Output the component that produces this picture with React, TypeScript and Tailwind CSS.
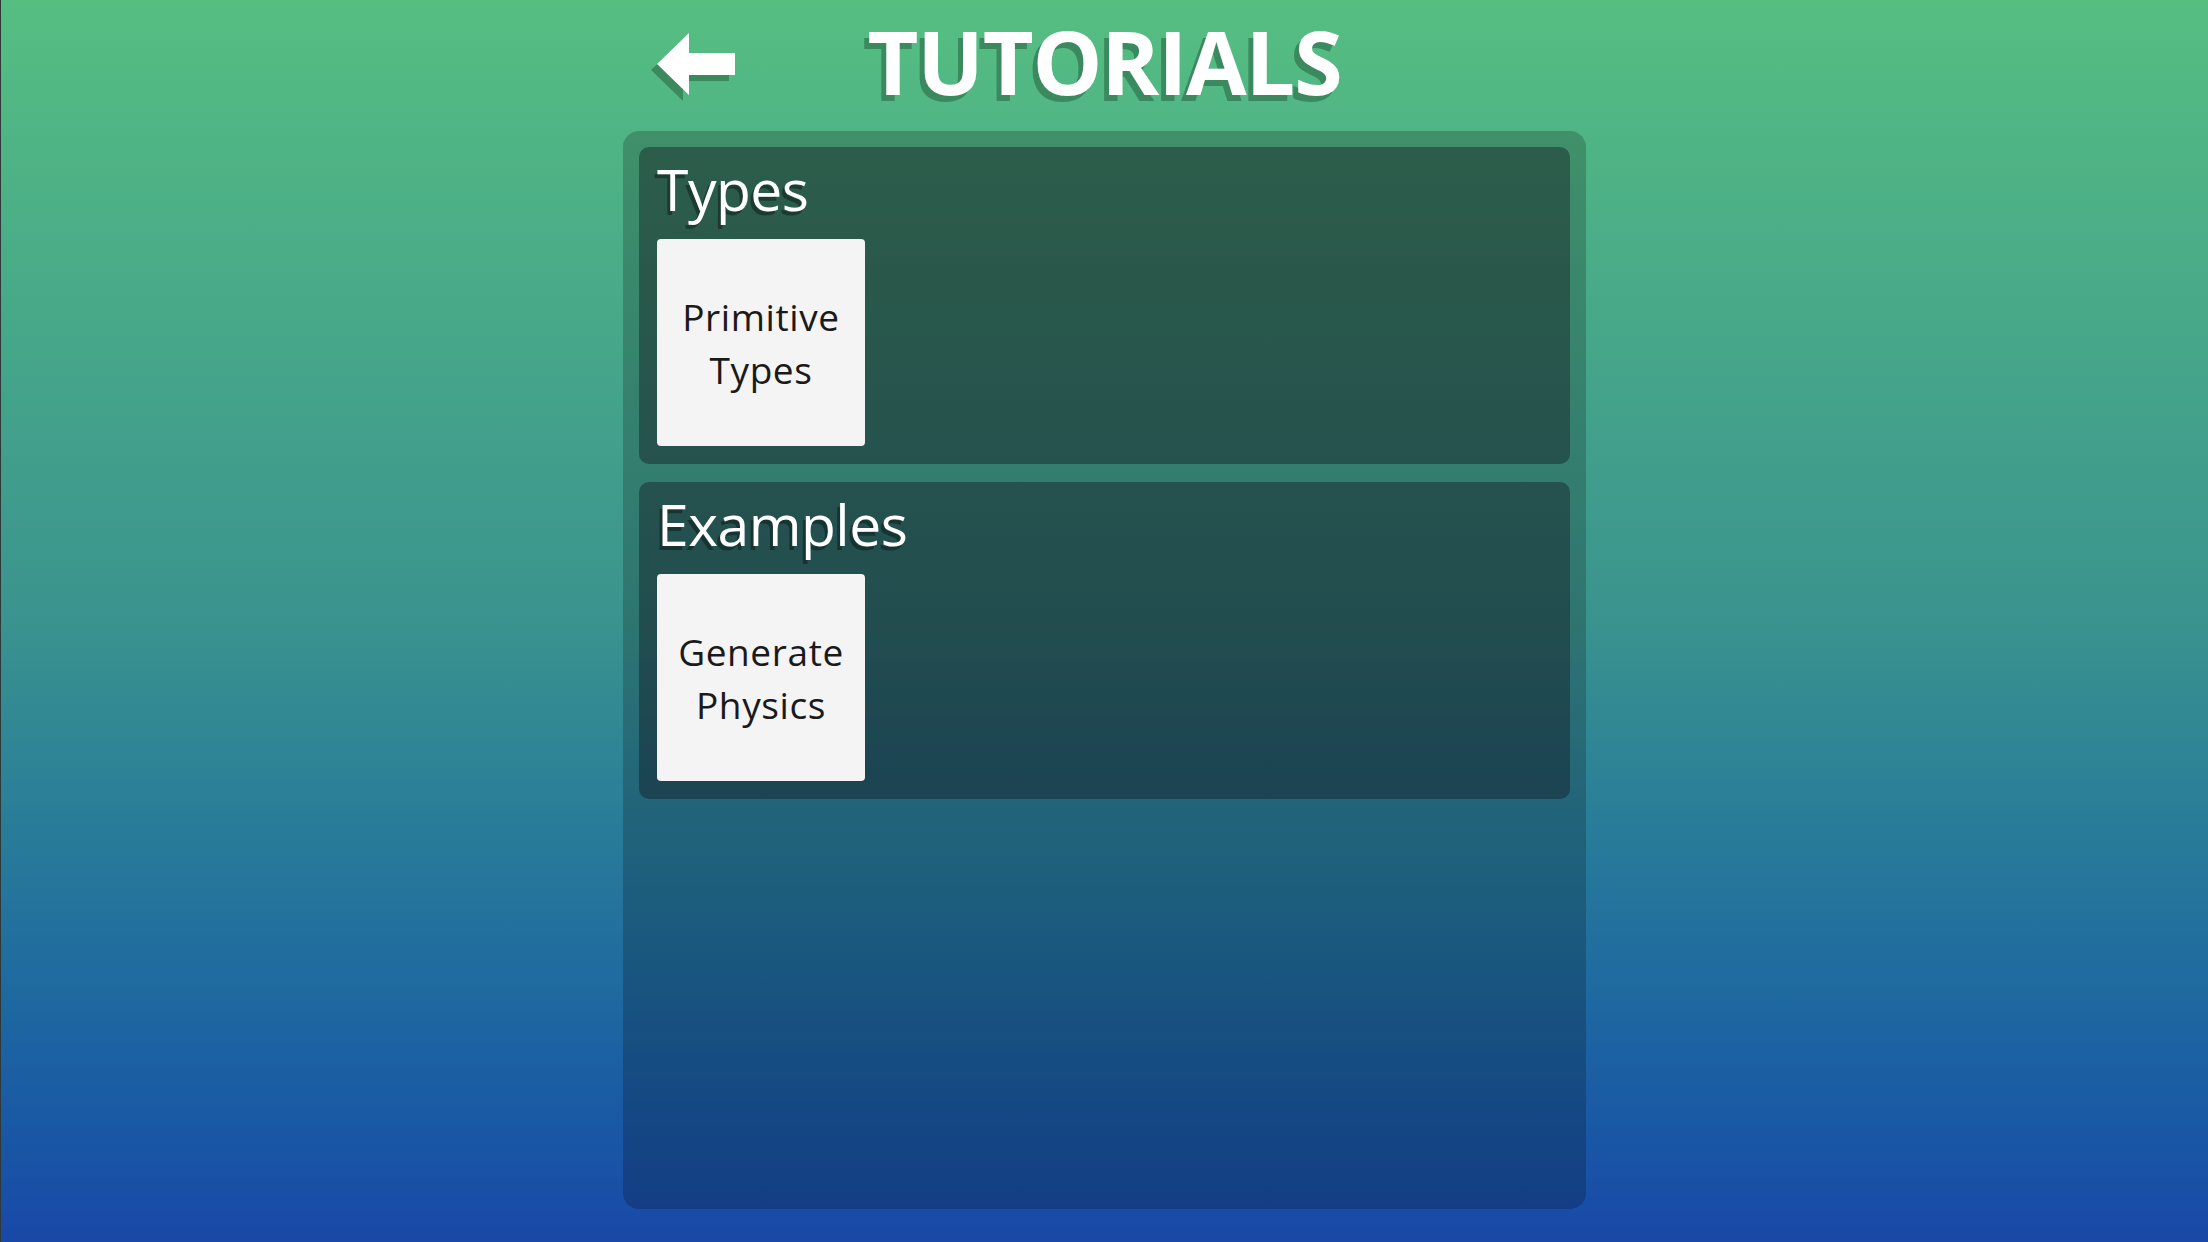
import React from 'react';

const sections = [
  { title: 'Types', items: [['Primitive', 'Types']] },
  { title: 'Examples', items: [['Generate', 'Physics']] },
];

const BackArrow: React.FC = () => (
  <svg width="110" height="90" viewBox="0 0 110 90" className="block">
    <polygon points="11,50 43,19 43,39 89,39 89,61 43,61 43,81" fill="#3b8a5e" />
    <polygon points="17,44 49,13 49,33 95,33 95,55 49,55 49,75" fill="#ffffff" />
  </svg>
);

const TutorialCard: React.FC<{ lines: string[] }> = ({ lines }) => (
  <button className="w-[208px] h-[207px] rounded-[4px] bg-[#f4f4f4] flex flex-col items-center justify-center text-[37px] leading-[53px] tracking-[0.6px] text-[#1a1a1a] font-['Open_Sans',sans-serif]">
    {lines.map((l) => (
      <span key={l}>{l}</span>
    ))}
  </button>
);

const App: React.FC = () => {
  return (
    <div className="w-[2208px] h-[1242px] overflow-hidden border-l border-[#30393a] bg-linear-to-b from-[#56be81] via-[#3a938e] to-[#1948a8] flex flex-col items-center font-['Open_Sans',sans-serif]">
      <div className="w-[963px] h-[131px] grid grid-cols-[1fr_auto_1fr] items-start">
        <div className="pt-[20px] pl-[17px]">
          <BackArrow />
        </div>
        <h1 className="mt-[16px] text-[88px] leading-[90px] font-bold text-white tracking-[-1.2px] [text-shadow:-5px_6px_0_#3b8a5f]">
          TUTORIALS
        </h1>
        <div />
      </div>

      <div className="w-[963px] h-[1078px] rounded-[16px] bg-black/20 pt-[16px] pl-[16px] pr-[16px] flex flex-col gap-[18px]">
        {sections.map((s) => (
          <div key={s.title} className="rounded-[10px] bg-[#12121c]/40 pt-[13px] pb-[18px] pl-[18px]">
            <h2 className="text-[57px] leading-[58px] tracking-[-0.5px] text-white [text-shadow:-3px_4px_0_rgba(0,0,0,0.35)]">
              {s.title}
            </h2>
            <div className="mt-[21px] flex gap-4">
              {s.items.map((lines) => (
                <TutorialCard key={lines.join(' ')} lines={lines} />
              ))}
            </div>
          </div>
        ))}
      </div>
    </div>
  );
};

export default App;
